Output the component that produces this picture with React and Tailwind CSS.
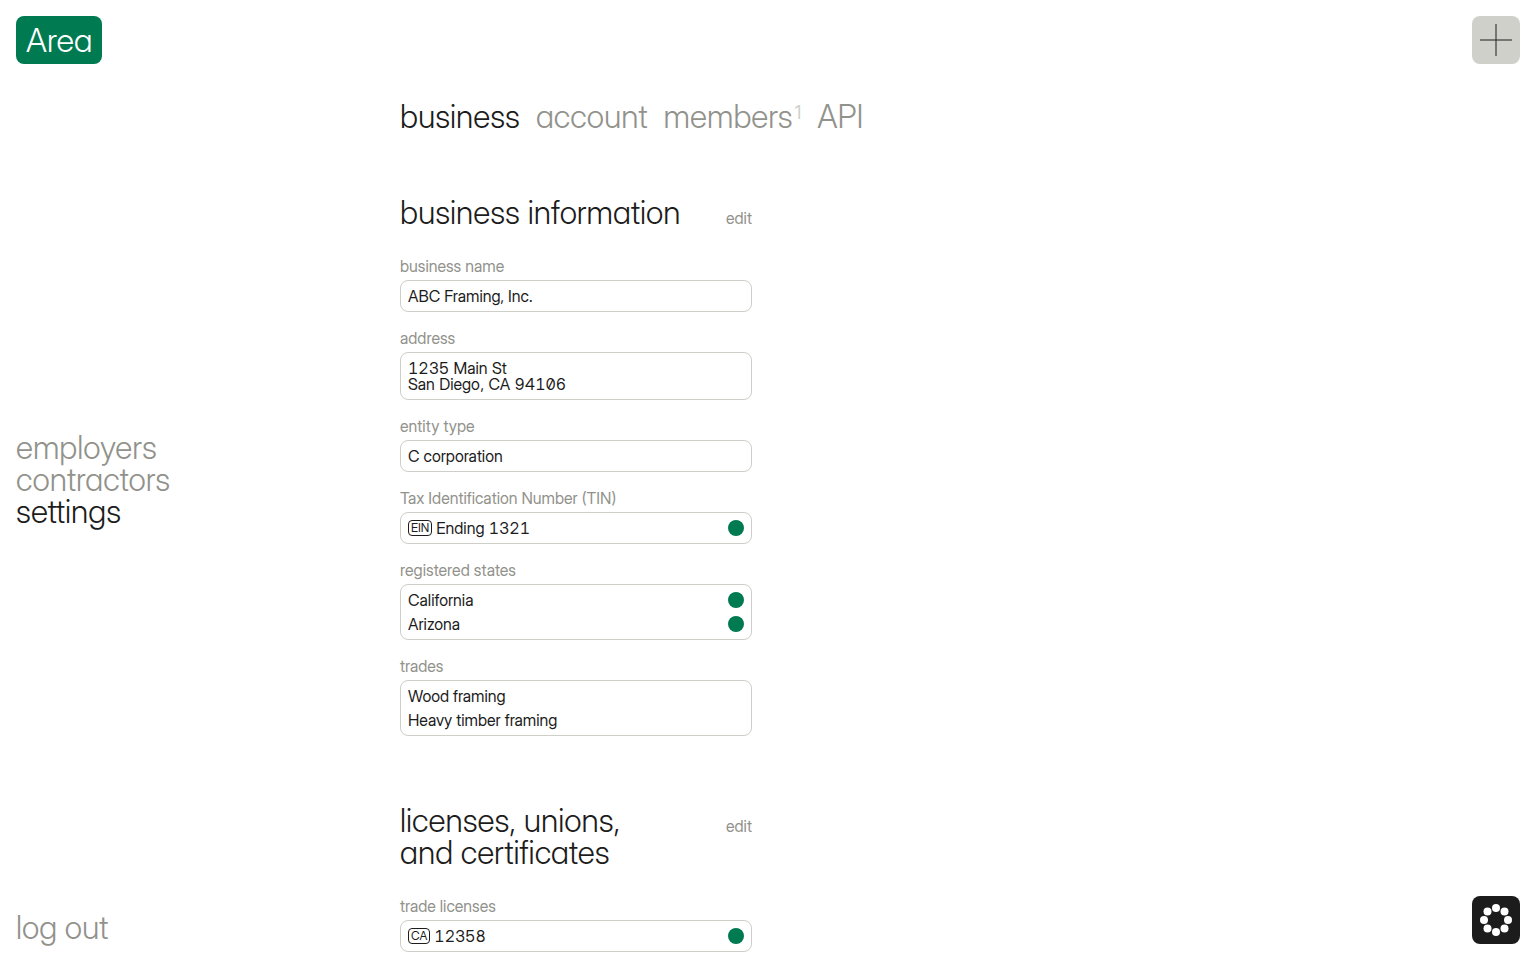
const TITLE =
  "text-[32px] leading-8 font-light [font-feature-settings:'cv11']";

const businessFields = [
  { label: "business name", rows: [{ text: "ABC Framing, Inc." }] },
  { label: "address", rows: [{ text: "1235 Main St\nSan Diego, CA 94106" }] },
  { label: "entity type", rows: [{ text: "C corporation" }] },
  {
    label: "Tax Identification Number (TIN)",
    rows: [{ badge: "EIN", text: "Ending 1321", verified: true }],
  },
  {
    label: "registered states",
    rows: [
      { text: "California", verified: true },
      { text: "Arizona", verified: true },
    ],
  },
  {
    label: "trades",
    rows: [{ text: "Wood framing" }, { text: "Heavy timber framing" }],
  },
];

const licenseFields = [
  {
    label: "trade licenses",
    rows: [{ badge: "CA", text: "12358", verified: true }],
  },
];

function Row({ badge, text, verified }) {
  const numeric = /\d/.test(text);
  return (
    <div className="flex items-center gap-1">
      {badge && (
        <span className="flex h-4 items-center rounded border border-[#1c1c1c] px-0.5 text-xs leading-none">
          {badge}
        </span>
      )}
      <span
        className={`whitespace-pre-line ${numeric ? "slashed-zero tabular-nums" : ""}`}
      >
        {text}
      </span>
      {verified && (
        <span
          role="img"
          aria-label="verified"
          className="ml-auto size-4 rounded-full bg-[#007a50]"
        />
      )}
    </div>
  );
}

function Field({ label, rows }) {
  return (
    <div>
      <dt className="text-[#92928c]">{label}</dt>
      <dd className="mt-1.5 flex flex-col gap-2 rounded-lg border border-[#cfcfc9] p-[7px]">
        {rows.map((row) => (
          <Row key={row.text} {...row} />
        ))}
      </dd>
    </div>
  );
}

function Section({ title, fields }) {
  return (
    <section>
      <header className="flex items-baseline justify-between">
        <h2 className={`${TITLE} whitespace-pre-line`}>{title}</h2>
        <button type="button" className="text-[#92928c]">
          edit
        </button>
      </header>
      <dl className="mt-[29px] flex flex-col gap-[18px]">
        {fields.map((field) => (
          <Field key={field.label} {...field} />
        ))}
      </dl>
    </section>
  );
}

const beads = Array.from({ length: 8 }, (_, i) => {
  const angle = (i * Math.PI) / 4;
  return { x: 16 + 12 * Math.cos(angle), y: 16 + 12 * Math.sin(angle) };
});

export default function App() {
  return (
    <div className="grid grid-cols-4 bg-white font-['Inter_Display','Inter',sans-serif] text-base leading-4 text-[#1c1c1c]">
      <aside className="sticky top-0 grid h-screen grid-rows-[1fr_auto_1fr] p-4">
        <a
          href="#home"
          className="flex h-12 items-center justify-self-start rounded-lg bg-[#007a50] px-2.5 text-[33px] leading-8 font-light text-white [font-feature-settings:'cv11']"
        >
          Area
        </a>
        <nav className={`${TITLE} flex flex-col items-start text-[#92928c]`}>
          <a href="#employers">employers</a>
          <a href="#contractors">contractors</a>
          <a href="#settings" aria-current="page" className="text-[#1c1c1c]">
            settings
          </a>
        </nav>
        <button
          type="button"
          className={`${TITLE} self-end justify-self-start text-[#92928c]`}
        >
          log out
        </button>
      </aside>

      <main className="px-4 pt-[101px] pb-2">
        <nav
          className={`${TITLE} flex gap-4 whitespace-nowrap text-[#92928c]`}
        >
          <a href="#business" aria-current="page" className="text-[#1c1c1c]">
            business
          </a>
          <a href="#account">account</a>
          <a href="#members" className="flex gap-0.5">
            members
            <span className="text-lg leading-6 font-normal text-[#cfcfc9]">
              1
            </span>
          </a>
          <a href="#api">API</a>
        </nav>
        <div className="mt-16 flex flex-col gap-[69px]">
          <Section title="business information" fields={businessFields} />
          <Section
            title={"licenses, unions,\nand certificates"}
            fields={licenseFields}
          />
        </div>
      </main>

      <div className="sticky top-0 col-start-4 flex h-screen flex-col items-end justify-between p-4">
        <button
          type="button"
          aria-label="Add"
          className="flex size-12 items-center justify-center rounded-lg bg-[#d0d0ca]"
        >
          <svg viewBox="0 0 32 32" className="size-8" aria-hidden="true">
            <g stroke="#1c1c1c" strokeOpacity="0.5" strokeWidth="2">
              <path d="M16 0v32" />
              <path d="M0 16h32" />
            </g>
          </svg>
        </button>
        <button
          type="button"
          aria-label="Help"
          className="flex size-12 items-center justify-center rounded-lg bg-[#1c1c1c]"
        >
          <svg viewBox="0 0 32 32" className="size-8" aria-hidden="true">
            {beads.map(({ x, y }) => (
              <circle key={`${x},${y}`} cx={x} cy={y} r="4" fill="#fff" />
            ))}
          </svg>
        </button>
      </div>
    </div>
  );
}
